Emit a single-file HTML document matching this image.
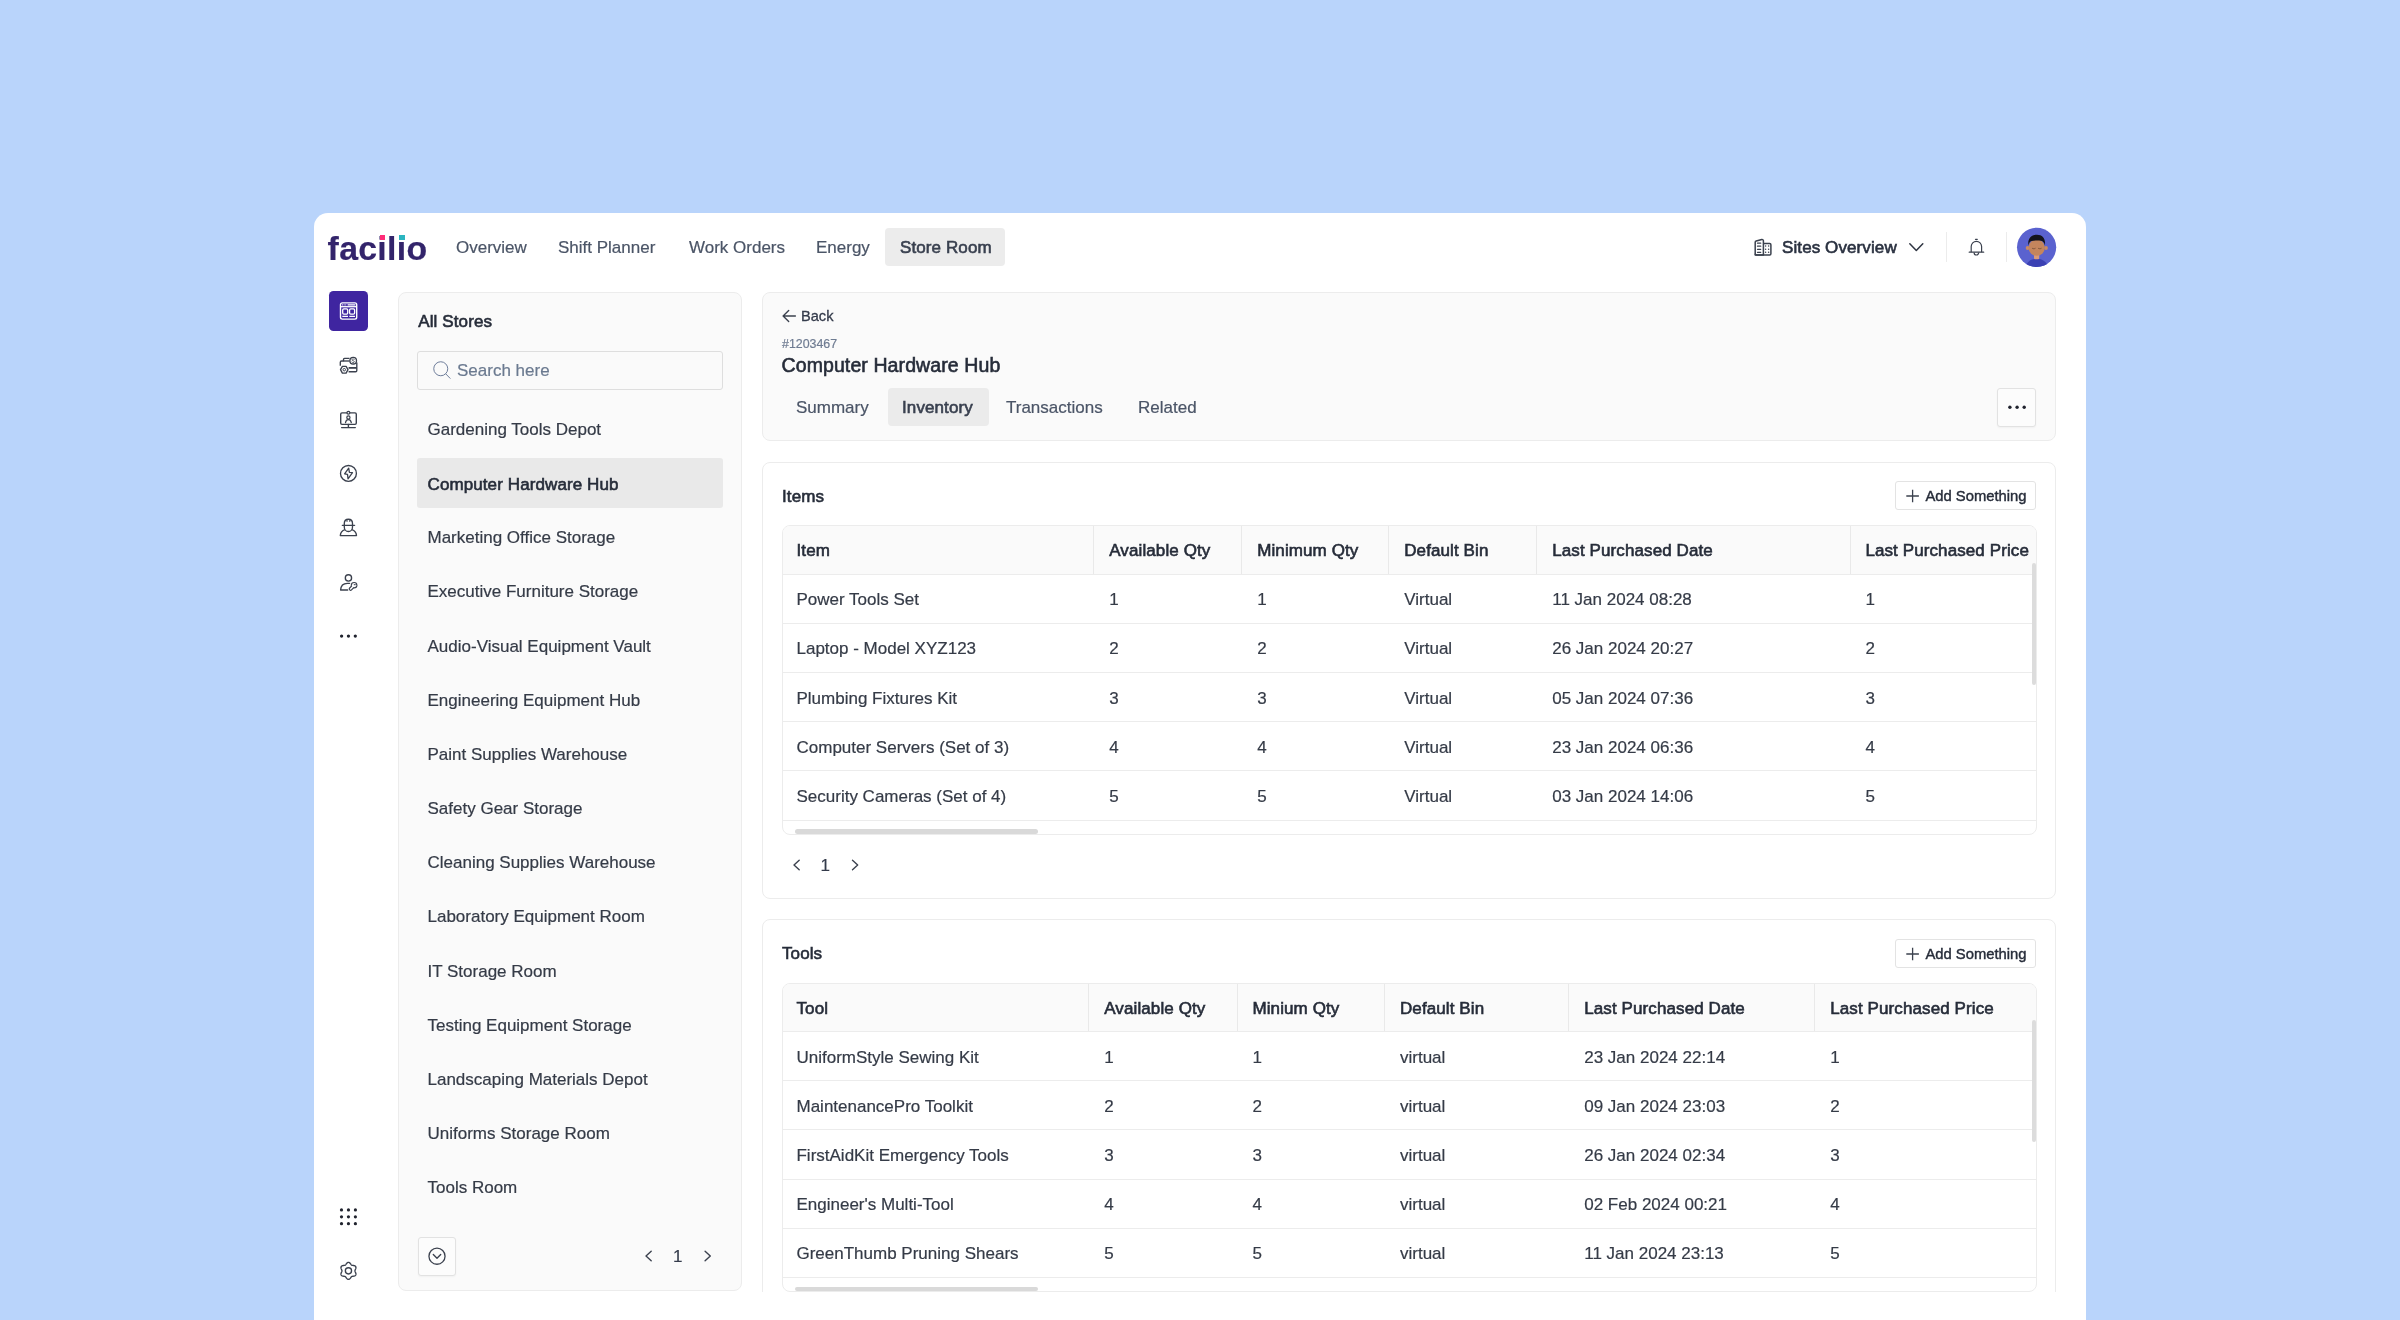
<!DOCTYPE html>
<html lang="en">
<head>
<meta charset="utf-8">
<title>Facilio - Store Room</title>
<style>
*{box-sizing:border-box;margin:0;padding:0}
html,body{width:2400px;height:1320px;overflow:hidden}
body{background:#b9d4fb;position:relative;font-family:"Liberation Sans",sans-serif;font-size:17px;color:#2f3646;-webkit-font-smoothing:antialiased;-webkit-text-stroke:0.2px currentColor}
#root{position:absolute;left:0;top:0;width:2400px;height:1320px;will-change:transform}
#root>div,.tbl>div{position:absolute}
svg{position:absolute;overflow:visible}
.m{-webkit-text-stroke:0.6px currentColor;letter-spacing:0.1px}
#app{left:313.9px;top:212.7px;width:1772px;height:1110px;background:#fff;border-radius:14px 14px 0 0}
.nav{top:228px;height:40px;line-height:40px;color:#4b5567;white-space:nowrap}
.navsel{left:885.3px;top:227.6px;width:120px;height:38.8px;background:#ececec;border-radius:4px}
.logo{left:327.6px;top:228.4px;font-weight:bold;font-size:33.8px;line-height:40px;color:#33246b;letter-spacing:0.3px;white-space:nowrap}
.vdiv{width:1px;height:30px;top:232px;background:#ececec}
.rail-active{left:328.7px;top:291px;width:39.4px;height:40px;background:#3f25a0;border-radius:4.5px}
.panel{background:#fafafa;border:1px solid #ececec;border-radius:8px}
.card{background:#fff;border:1px solid #ececec;border-radius:8px}
.li{left:427.5px;height:49px;line-height:49px;color:#353b47;white-space:nowrap}
.li.sel{-webkit-text-stroke:0.6px currentColor;color:#262c39;letter-spacing:0.1px}
.lisel{background:#e9e9e9;border-radius:3px}
.search{left:417.4px;top:351px;width:305.2px;height:38.6px;border:1px solid #dedede;border-radius:3px;background:#fafafa}
.sbtn{border:1px solid #e2e2e2;border-radius:3px;background:#fcfcfc;box-shadow:0 1px 2px rgba(0,0,0,0.04)}
.h{white-space:nowrap;color:#262c39}
.tab{top:388px;height:40px;line-height:40px;color:#4b5567;white-space:nowrap}
.tabsel{left:887.8px;top:387.5px;width:101px;height:38.8px;background:#ebebeb;border-radius:4px}
.addbtn{left:1895.4px;width:141px;height:29.3px;border:1px solid #e3e3e3;border-radius:3px;background:#fff;font-size:14.8px;line-height:28px;padding-left:29px;white-space:nowrap;color:#262c39;-webkit-text-stroke:0.4px currentColor}
.tbl{border:1px solid #ececec;border-radius:8px;overflow:hidden;background:#fff}
.thead{left:0;top:0;width:100%;background:#fafafa}
.th{white-space:nowrap;color:#262c39;-webkit-text-stroke:0.6px currentColor;letter-spacing:0.1px}
.vsep{top:0;width:1px;background:#e9e9e9}
.td{white-space:nowrap;color:#353b47}
.hline{left:0;width:100%;height:1px;background:#ececec}
.hscroll{left:11.5px;width:243.5px;height:4.6px;border-radius:3px;background:#d9d9d9}
.vscroll{width:3.8px;height:122px;border-radius:2px;background:#dcdcdc}
.pg{white-space:nowrap;color:#343b4b;font-size:17px;line-height:30px;height:30px}
.clip{left:742px;top:280px;width:1344px;height:1011px;overflow:hidden}

</style>
</head>
<body>
<div id="root">
<div id="app"></div>

<!-- top nav -->
<div class="logo">facilio</div>
<div style="left:379.8px;top:234.6px;width:5.4px;height:5.2px;background:#ff2d78"></div>
<div style="left:399.4px;top:234.6px;width:5.6px;height:5.2px;background:#2bb5c0"></div>
<div class="nav" style="left:456px">Overview</div>
<div class="nav" style="left:558px">Shift Planner</div>
<div class="nav" style="left:689px">Work Orders</div>
<div class="nav" style="left:816px">Energy</div>
<div class="navsel"></div>
<div class="nav m" style="left:900px;color:#39404f">Store Room</div>
<svg style="left:1750px;top:234px" width="26" height="26" viewBox="1750 234 26 26" fill="none" >
<path d="M1755.2 254.9V242.2c0-.6.4-1.1 1-1.2l5.6-1.5c.8-.2 1.6.4 1.6 1.2v14.2z" stroke="#3b414e" stroke-width="1.5" stroke-linejoin="round"/>
<path d="M1763.4 243.6h6.3c.7 0 1.2.5 1.2 1.2v8.9c0 .7-.5 1.2-1.2 1.2h-13.3c-.7 0-1.2-.5-1.2-1.2" stroke="#3b414e" stroke-width="1.5" stroke-linejoin="round"/>
<path d="M1757.5 243.2h3.2M1757.5 246.2h3.2M1757.5 249.3h3.2M1757.5 252.3h3.2" stroke="#3b414e" stroke-width="1.3" stroke-linecap="round"/>
<g fill="#3b414e"><circle cx="1765.6" cy="246" r=".75"/><circle cx="1768.6" cy="246" r=".75"/><circle cx="1765.6" cy="249.2" r=".75"/><circle cx="1768.6" cy="249.2" r=".75"/><circle cx="1765.6" cy="252.3" r=".75"/><circle cx="1768.6" cy="252.3" r=".75"/></g>
</svg>
<div class="nav m" style="left:1782px;color:#2a3140">Sites Overview</div>
<svg style="left:1904px;top:238px" width="24" height="18" viewBox="1904 238 24 18" fill="none" ><path d="M1909.8 243.7l6.5 6.8 6.5-6.8" stroke="#2f3542" stroke-width="1.5" stroke-linecap="round" stroke-linejoin="round"/></svg>
<div class="vdiv" style="left:1946px"></div>
<svg style="left:1964px;top:234px" width="26" height="26" viewBox="1964 234 26 26" fill="none" >
<path d="M1975.5 239.3h1.8" stroke="#3b414e" stroke-width="1.2" stroke-linecap="round"/>
<path d="M1971.2 252.2v-5.6a5.2 5.2 0 0 1 10.4 0v5.6" stroke="#3b414e" stroke-width="1.2"/>
<path d="M1969.2 252.2h14.5" stroke="#3b414e" stroke-width="1.2" stroke-linecap="round"/>
<path d="M1974.1 252.4a2.3 2.6 0 0 0 4.6 0" stroke="#3b414e" stroke-width="1.2"/>
</svg>
<div class="vdiv" style="left:2006px"></div>
<svg style="left:2016px;top:226px" width="42" height="42" viewBox="2016 226 42 42" fill="none" >
<defs><clipPath id="avc"><circle cx="2036.6" cy="247.3" r="19.6"/></clipPath></defs>
<circle cx="2036.6" cy="247.3" r="19.6" fill="#5a62cf"/>
<g clip-path="url(#avc)">
<path d="M2025.5 268c1-6 5-9.3 11.2-9.3s10.5 3.300 11.500 9.300z" fill="#3b41b3"/>
<rect x="2034" y="254" width="5.200" height="5.200" rx="1" fill="#d79a7c"/>
<circle cx="2027.6" cy="248" r="1.900" fill="#c98a62"/><circle cx="2046" cy="248" r="1.900" fill="#c98a62"/>
<ellipse cx="2036.7" cy="247.600" rx="8.100" ry="8.200" fill="#c4855d"/>
<path d="M2028.4 245.500C2027.400 239 2031 234.800 2037 234.800C2042.800 234.800 2045.800 239 2044.900 245.500C2044.300 242.600 2043.200 241.200 2041 240.800C2038 240.300 2034 240.400 2031.500 241.100C2029.800 241.700 2029 243.200 2028.400 245.500Z" fill="#14141c"/>
<path d="M2032.400 248.400c.9.500 1.900.500 2.800 0M2038.400 248.400c.9.500 1.900.500 2.800 0" stroke="#5b3a2a" stroke-width=".6" stroke-linecap="round"/>
</g>
</svg>

<!-- icon rail -->
<div class="rail-active"></div>
<svg style="left:330px;top:292px" width="38" height="38" viewBox="330 292 38 38" fill="none" >
<rect x="340.500" y="302.900" width="16.200" height="16.200" rx="1.800" stroke="#fff" stroke-width="1.400"/>
<path d="M340.500 306.700h16.200" stroke="#fff" stroke-width="1.300"/>
<path d="M342 304.800h.8M343.700 304.800h.8M345.400 304.800h.8M347.600 304.800h7.800" stroke="#fff" stroke-width="1.250"/>
<rect x="342.700" y="308.900" width="5" height="5.300" rx="1.100" stroke="#fff" stroke-width="1.300"/>
<rect x="349.600" y="308.900" width="5" height="5.300" rx="1.100" stroke="#fff" stroke-width="1.300"/>
<path d="M342.300 316.400h5.700M349.300 316.400h5.700" stroke="#fff" stroke-width="1.300"/>
</svg><svg style="left:336px;top:353px" width="26" height="26" viewBox="336 353 26 26" fill="none" >
<path d="M349.500 358.400h-5c-.6 0-1 .4-1 1v1.600h-2c-.7 0-1.200.500-1.200 1.200v3.500" stroke="#3b414e" stroke-width="1.350" stroke-linejoin="round"/>
<path d="M343.500 361h6.200" stroke="#3b414e" stroke-width="1.350"/>
<path d="M356.800 362.500v8c0 .700-.5 1.200-1.200 1.200h-7" stroke="#3b414e" stroke-width="1.350" stroke-linejoin="round"/>
<path d="M348.600 367.900h8.200" stroke="#3b414e" stroke-width="1.800"/>
<circle cx="353.200" cy="360.700" r="3.300" stroke="#3b414e" stroke-width="1.350" fill="#fff"/>
<path d="M354.300 359.500c-.3-.4-.7-.6-1.200-.6-.7 0-1.200.4-1.200.9 0 1.200 2.500.6 2.500 1.900 0 .5-.5.900-1.200.9-.5 0-1-.2-1.300-.6" stroke="#3b414e" stroke-width=".8" stroke-linecap="round"/>
<path d="M342.400 366.300h3.700l1.900 3.400-1.900 3.400h-3.700l-1.900-3.400z" stroke="#3b414e" stroke-width="1.350" stroke-linejoin="round" fill="#fff"/>
<circle cx="344.250" cy="369.700" r="1.250" stroke="#3b414e" stroke-width="1"/>
</svg><svg style="left:336px;top:407px" width="26" height="26" viewBox="336 407 26 26" fill="none" >
<rect x="340.700" y="412.900" width="15.600" height="11.500" rx="1.300" stroke="#3b414e" stroke-width="1.400"/>
<circle cx="348.400" cy="412.800" r="1.450" stroke="#3b414e" stroke-width="1.250" fill="#fff"/>
<path d="M348.400 424.400v3.100M341.600 427.600h13.700" stroke="#3b414e" stroke-width="1.400" stroke-linecap="round"/>
<circle cx="348.400" cy="417.400" r="1.600" stroke="#3b414e" stroke-width="1.250"/>
<path d="M345.500 422.600c.4-1.900 1.500-2.900 2.900-2.900s2.500 1 2.900 2.900" stroke="#3b414e" stroke-width="1.250" stroke-linecap="round"/>
</svg><svg style="left:336px;top:461px" width="26" height="26" viewBox="336 461 26 26" fill="none" >
<circle cx="348.450" cy="473.450" r="7.950" stroke="#3b414e" stroke-width="1.350"/>
<path d="M348.700 468.100l-4.100 5.700 2.900.5.500 4.500 4.500-6.100-3.100-.4z" stroke="#3b414e" stroke-width="1.300" stroke-linejoin="round"/>
</svg><svg style="left:336px;top:515px" width="26" height="26" viewBox="336 515 26 26" fill="none" >
<path d="M342.300 525.300h12.300" stroke="#3b414e" stroke-width="1.350" stroke-linecap="round"/>
<path d="M344.300 525.300v-1.800c0-2.500 1.700-4.300 4.100-4.300s4.100 1.800 4.100 4.300v1.800" stroke="#3b414e" stroke-width="1.350"/>
<path d="M347 519.600v2.300M349.800 519.600v2.300" stroke="#3b414e" stroke-width="1"/>
<path d="M344.300 525.300v1.600c0 2.600 1.700 4.600 4.100 4.600s4.100-2 4.100-4.600v-1.600" stroke="#3b414e" stroke-width="1.350"/>
<path d="M345 529.600c-2.800.9-4.500 3-4.700 6h16.200c-.2-3-1.900-5.100-4.700-6" stroke="#3b414e" stroke-width="1.350" stroke-linejoin="round"/>
</svg><svg style="left:336px;top:569px" width="26" height="26" viewBox="336 569 26 26" fill="none" >
<circle cx="348.450" cy="577.900" r="3.150" stroke="#3b414e" stroke-width="1.350"/>
<path d="M349.600 583.300h-2.200c-4 0-6.600 2.600-6.800 6.700h7.100" stroke="#3b414e" stroke-width="1.350" stroke-linejoin="round" stroke-linecap="round"/>
<path d="M350.600 588.900l2.600-2.700" stroke="#3b414e" stroke-width="3.800" stroke-linecap="round"/>
<circle cx="354.100" cy="585.200" r="3.300" fill="#3b414e"/>
<path d="M350.600 588.900l2.600-2.700" stroke="#fff" stroke-width="1.500" stroke-linecap="round"/>
<circle cx="354.100" cy="585.200" r="2.150" fill="#fff"/>
<path d="M354.200 584.700h1.100" stroke="#3b414e" stroke-width="1" stroke-linecap="round"/>
</svg><svg style="left:336px;top:626px" width="26" height="20" viewBox="336 626 26 20" fill="none" ><g fill="#20232e"><circle cx="341.600" cy="636.100" r="1.650"/><circle cx="348.450" cy="636.100" r="1.650"/><circle cx="355.300" cy="636.100" r="1.650"/></g></svg><svg style="left:336px;top:1204px" width="26" height="26" viewBox="336 1204 26 26" fill="none" ><g fill="#20232e"><circle cx="341.5" cy="1209.9" r="1.600"/><circle cx="348.45" cy="1209.9" r="1.600"/><circle cx="355.4" cy="1209.9" r="1.600"/><circle cx="341.5" cy="1216.8" r="1.600"/><circle cx="348.45" cy="1216.8" r="1.600"/><circle cx="355.4" cy="1216.8" r="1.600"/><circle cx="341.5" cy="1223.7" r="1.600"/><circle cx="348.45" cy="1223.7" r="1.600"/><circle cx="355.4" cy="1223.7" r="1.600"/></g></svg><svg style="left:336px;top:1258px" width="26" height="26" viewBox="336 1258 26 26" fill="none" ><path d="M354.95 1270.85 L354.99 1270.50 L355.09 1270.14 L355.25 1269.76 L355.44 1269.34 L355.63 1268.90 L355.80 1268.43 L355.91 1267.94 L355.94 1267.47 L355.87 1267.01 L355.70 1266.60 L355.43 1266.25 L355.08 1265.96 L354.66 1265.75 L354.19 1265.60 L353.71 1265.51 L353.23 1265.46 L352.78 1265.42 L352.38 1265.36 L352.02 1265.28 L351.70 1265.13 L351.42 1264.93 L351.17 1264.65 L350.92 1264.32 L350.66 1263.95 L350.37 1263.56 L350.06 1263.18 L349.70 1262.84 L349.31 1262.58 L348.89 1262.41 L348.45 1262.35 L348.01 1262.41 L347.59 1262.58 L347.20 1262.84 L346.84 1263.18 L346.53 1263.56 L346.24 1263.95 L345.98 1264.32 L345.73 1264.65 L345.48 1264.93 L345.20 1265.13 L344.88 1265.28 L344.52 1265.36 L344.12 1265.42 L343.67 1265.46 L343.19 1265.51 L342.71 1265.60 L342.24 1265.75 L341.82 1265.96 L341.47 1266.25 L341.20 1266.60 L341.03 1267.01 L340.96 1267.47 L340.99 1267.94 L341.10 1268.43 L341.27 1268.90 L341.46 1269.34 L341.65 1269.76 L341.81 1270.14 L341.91 1270.50 L341.95 1270.85 L341.91 1271.20 L341.81 1271.56 L341.65 1271.94 L341.46 1272.36 L341.27 1272.80 L341.10 1273.27 L340.99 1273.76 L340.96 1274.23 L341.03 1274.69 L341.20 1275.10 L341.47 1275.45 L341.82 1275.74 L342.24 1275.95 L342.71 1276.10 L343.19 1276.19 L343.67 1276.24 L344.12 1276.28 L344.52 1276.34 L344.88 1276.42 L345.20 1276.57 L345.48 1276.77 L345.73 1277.05 L345.98 1277.38 L346.24 1277.75 L346.53 1278.14 L346.84 1278.52 L347.20 1278.86 L347.59 1279.12 L348.01 1279.29 L348.45 1279.35 L348.89 1279.29 L349.31 1279.12 L349.70 1278.86 L350.06 1278.52 L350.37 1278.14 L350.66 1277.75 L350.92 1277.38 L351.17 1277.05 L351.42 1276.77 L351.70 1276.57 L352.02 1276.42 L352.38 1276.34 L352.78 1276.28 L353.23 1276.24 L353.71 1276.19 L354.19 1276.10 L354.66 1275.95 L355.08 1275.74 L355.43 1275.45 L355.70 1275.10 L355.87 1274.69 L355.94 1274.23 L355.91 1273.76 L355.80 1273.27 L355.63 1272.80 L355.44 1272.36 L355.25 1271.94 L355.09 1271.56 L354.99 1271.20Z" stroke="#3b414e" stroke-width="1.350" stroke-linejoin="round"/><circle cx="348.45" cy="1270.85" r="3.100" stroke="#3b414e" stroke-width="1.350"/></svg>

<!-- sidebar -->
<div class="panel" style="left:398px;top:292px;width:344px;height:999px"></div>
<div class="h m" style="left:418.3px;top:307px;line-height:30px">All Stores</div>
<div class="search"></div>
<svg style="left:430px;top:358px" width="24" height="24" viewBox="430 358 24 24" fill="none" ><circle cx="440.750" cy="368.750" r="7" stroke="#6f7e9b" stroke-width="1"/><path d="M445.800 373.900l4.300 4.400" stroke="#6f7e9b" stroke-width="1" stroke-linecap="round"/></svg>
<div style="left:457px;top:351px;line-height:40px;color:#6b7a90;white-space:nowrap">Search here</div>
<div class="lisel" style="left:417.3px;top:458.4px;width:305.4px;height:49.3px"></div>
<div class="li" style="top:405.0px">Gardening Tools Depot</div>
<div class="li sel" style="top:459.75px">Computer Hardware Hub</div>
<div class="li" style="top:513.3px">Marketing Office Storage</div>
<div class="li" style="top:567.45px">Executive Furniture Storage</div>
<div class="li" style="top:621.6px">Audio-Visual Equipment Vault</div>
<div class="li" style="top:675.75px">Engineering Equipment Hub</div>
<div class="li" style="top:729.9px">Paint Supplies Warehouse</div>
<div class="li" style="top:784.05px">Safety Gear Storage</div>
<div class="li" style="top:838.2px">Cleaning Supplies Warehouse</div>
<div class="li" style="top:892.3499999999999px">Laboratory Equipment Room</div>
<div class="li" style="top:946.5px">IT Storage Room</div>
<div class="li" style="top:1000.6500000000001px">Testing Equipment Storage</div>
<div class="li" style="top:1054.8px">Landscaping Materials Depot</div>
<div class="li" style="top:1108.9499999999998px">Uniforms Storage Room</div>
<div class="li" style="top:1163.1px">Tools Room</div>
<div class="sbtn" style="left:417.6px;top:1237px;width:38.9px;height:38.8px"></div>
<svg style="left:426px;top:1245px" width="22" height="22" viewBox="426 1245 22 22" fill="none" ><circle cx="437" cy="1256.200" r="8.050" stroke="#3b414e" stroke-width="1.300"/><path d="M433.300 1254.500l3.700 3.800 3.700-3.800" stroke="#3b414e" stroke-width="1.350" stroke-linecap="round" stroke-linejoin="round"/></svg>
<svg style="left:642.2px;top:1248.2px" width="72.29999999999995" height="16" viewBox="642.2 1248.2 72.29999999999995 16" fill="none" ><path d="M651.4 1251.4L646.2 1256.2L651.4 1261.0M705.3 1251.4L710.5 1256.2L705.3 1261.0" stroke="#3b414e" stroke-width="1.400" stroke-linecap="round" stroke-linejoin="round"/></svg>
<div class="pg" style="left:673px;top:1242px">1</div>

<!-- header card -->
<div class="panel" style="left:762px;top:291.7px;width:1294px;height:149.5px"></div>
<svg style="left:778px;top:306px" width="22" height="20" viewBox="778 306 22 20" fill="none" ><path d="M783.200 316h12.200M788.700 310.500l-5.600 5.500 5.600 5.500" stroke="#3b414e" stroke-width="1.350" stroke-linecap="round" stroke-linejoin="round"/></svg>
<div style="left:801px;top:301px;line-height:30px;font-size:14.6px;color:#343b4b;white-space:nowrap;-webkit-text-stroke:0.3px currentColor">Back</div>
<div style="left:782px;top:334px;line-height:20px;font-size:12.4px;color:#6f7c92;white-space:nowrap">#1203467</div>
<div class="h m" style="left:781.5px;top:350px;line-height:30px;font-size:19.5px">Computer Hardware Hub</div>
<div class="tab" style="left:796px">Summary</div>
<div class="tabsel"></div>
<div class="tab m" style="left:902px;color:#39404f">Inventory</div>
<div class="tab" style="left:1006px">Transactions</div>
<div class="tab" style="left:1138px">Related</div>
<div class="sbtn" style="left:1997.4px;top:387.8px;width:39.1px;height:38.8px"></div>
<svg style="left:2004px;top:400px" width="26" height="14" viewBox="2004 400 26 14" fill="none" ><g fill="#20232e"><circle cx="2009.900" cy="407.250" r="1.700"/><circle cx="2017.100" cy="407.250" r="1.700"/><circle cx="2024.200" cy="407.250" r="1.700"/></g></svg>

<!-- items card -->
<div class="card" style="left:762px;top:461.5px;width:1294px;height:437px"></div>
<div class="h m" style="left:782px;top:482px;line-height:30px">Items</div>
<div class="addbtn" style="top:481px">Add Something</div>
<svg style="left:1904px;top:487.6px" width="18" height="16" viewBox="1904 487.6 18 16" fill="none" ><path d="M1906.300 495.6h12.600M1912.600 489.3v12.600" stroke="#3b414e" stroke-width="1.300"/></svg>
<div class="tbl" style="left:782.2px;top:525.3px;width:1255px;height:309.7px">
<div class="thead" style="height:47.3px"></div>
<div class="th" style="left:13.30px;top:0.9000000000000001px;height:47.3px;line-height:47.3px">Item</div>
<div class="vsep" style="left:310.25px;height:47.3px"></div>
<div class="th" style="left:326.05px;top:0.9000000000000001px;height:47.3px;line-height:47.3px">Available Qty</div>
<div class="vsep" style="left:458.25px;height:47.3px"></div>
<div class="th" style="left:474.05px;top:0.9000000000000001px;height:47.3px;line-height:47.3px">Minimum Qty</div>
<div class="vsep" style="left:605.25px;height:47.3px"></div>
<div class="th" style="left:621.05px;top:0.9000000000000001px;height:47.3px;line-height:47.3px">Default Bin</div>
<div class="vsep" style="left:753.25px;height:47.3px"></div>
<div class="th" style="left:769.05px;top:0.9000000000000001px;height:47.3px;line-height:47.3px">Last Purchased Date</div>
<div class="vsep" style="left:1066.40px;height:47.3px"></div>
<div class="th" style="left:1082.20px;top:0.9000000000000001px;height:47.3px;line-height:47.3px">Last Purchased Price</div>
<div class="hline" style="top:47.30px"></div>
<div class="hline" style="top:96.50px"></div>
<div class="hline" style="top:145.70px"></div>
<div class="hline" style="top:194.90px"></div>
<div class="hline" style="top:244.10px"></div>
<div class="hline" style="top:293.30px"></div>
<div class="td" style="left:13.30px;top:49.90px;height:48.2px;line-height:48.2px">Power Tools Set</div>
<div class="td" style="left:326.05px;top:49.90px;height:48.2px;line-height:48.2px">1</div>
<div class="td" style="left:474.05px;top:49.90px;height:48.2px;line-height:48.2px">1</div>
<div class="td" style="left:621.05px;top:49.90px;height:48.2px;line-height:48.2px">Virtual</div>
<div class="td" style="left:769.05px;top:49.90px;height:48.2px;line-height:48.2px">11 Jan 2024 08:28</div>
<div class="td" style="left:1082.20px;top:49.90px;height:48.2px;line-height:48.2px">1</div>
<div class="td" style="left:13.30px;top:99.10px;height:48.2px;line-height:48.2px">Laptop - Model XYZ123</div>
<div class="td" style="left:326.05px;top:99.10px;height:48.2px;line-height:48.2px">2</div>
<div class="td" style="left:474.05px;top:99.10px;height:48.2px;line-height:48.2px">2</div>
<div class="td" style="left:621.05px;top:99.10px;height:48.2px;line-height:48.2px">Virtual</div>
<div class="td" style="left:769.05px;top:99.10px;height:48.2px;line-height:48.2px">26 Jan 2024 20:27</div>
<div class="td" style="left:1082.20px;top:99.10px;height:48.2px;line-height:48.2px">2</div>
<div class="td" style="left:13.30px;top:148.30px;height:48.2px;line-height:48.2px">Plumbing Fixtures Kit</div>
<div class="td" style="left:326.05px;top:148.30px;height:48.2px;line-height:48.2px">3</div>
<div class="td" style="left:474.05px;top:148.30px;height:48.2px;line-height:48.2px">3</div>
<div class="td" style="left:621.05px;top:148.30px;height:48.2px;line-height:48.2px">Virtual</div>
<div class="td" style="left:769.05px;top:148.30px;height:48.2px;line-height:48.2px">05 Jan 2024 07:36</div>
<div class="td" style="left:1082.20px;top:148.30px;height:48.2px;line-height:48.2px">3</div>
<div class="td" style="left:13.30px;top:197.50px;height:48.2px;line-height:48.2px">Computer Servers (Set of 3)</div>
<div class="td" style="left:326.05px;top:197.50px;height:48.2px;line-height:48.2px">4</div>
<div class="td" style="left:474.05px;top:197.50px;height:48.2px;line-height:48.2px">4</div>
<div class="td" style="left:621.05px;top:197.50px;height:48.2px;line-height:48.2px">Virtual</div>
<div class="td" style="left:769.05px;top:197.50px;height:48.2px;line-height:48.2px">23 Jan 2024 06:36</div>
<div class="td" style="left:1082.20px;top:197.50px;height:48.2px;line-height:48.2px">4</div>
<div class="td" style="left:13.30px;top:246.70px;height:48.2px;line-height:48.2px">Security Cameras (Set of 4)</div>
<div class="td" style="left:326.05px;top:246.70px;height:48.2px;line-height:48.2px">5</div>
<div class="td" style="left:474.05px;top:246.70px;height:48.2px;line-height:48.2px">5</div>
<div class="td" style="left:621.05px;top:246.70px;height:48.2px;line-height:48.2px">Virtual</div>
<div class="td" style="left:769.05px;top:246.70px;height:48.2px;line-height:48.2px">03 Jan 2024 14:06</div>
<div class="td" style="left:1082.20px;top:246.70px;height:48.2px;line-height:48.2px">5</div>
<div class="hscroll" style="top:302.90px"></div>
</div>
<div class="vscroll" style="left:2032.2px;top:562.6999999999999px"></div>
<svg style="left:790.0px;top:857.2px" width="71.70000000000005" height="16" viewBox="790.0 857.2 71.70000000000005 16" fill="none" ><path d="M799.2 860.4000000000001L794.0 865.2L799.2 870.0M852.5 860.4000000000001L857.7 865.2L852.5 870.0" stroke="#3b414e" stroke-width="1.400" stroke-linecap="round" stroke-linejoin="round"/></svg>
<div class="pg" style="left:820.6px;top:850.6px">1</div>

<!-- tools card -->
<div class="card" style="left:762px;top:918.8px;width:1294px;height:437px"></div>
<div class="h m" style="left:782px;top:939.2px;line-height:30px">Tools</div>
<div class="addbtn" style="top:939px">Add Something</div>
<svg style="left:1904px;top:946.0px" width="18" height="16" viewBox="1904 946.0 18 16" fill="none" ><path d="M1906.300 954.0h12.600M1912.600 947.7v12.600" stroke="#3b414e" stroke-width="1.300"/></svg>
<div class="tbl" style="left:782.2px;top:982.7px;width:1255px;height:309.7px">
<div class="thead" style="height:47.3px"></div>
<div class="th" style="left:13.30px;top:0.9000000000000001px;height:47.3px;line-height:47.3px">Tool</div>
<div class="vsep" style="left:305.25px;height:47.3px"></div>
<div class="th" style="left:321.05px;top:0.9000000000000001px;height:47.3px;line-height:47.3px">Available Qty</div>
<div class="vsep" style="left:453.50px;height:47.3px"></div>
<div class="th" style="left:469.30px;top:0.9000000000000001px;height:47.3px;line-height:47.3px">Minium Qty</div>
<div class="vsep" style="left:601.00px;height:47.3px"></div>
<div class="th" style="left:616.80px;top:0.9000000000000001px;height:47.3px;line-height:47.3px">Default Bin</div>
<div class="vsep" style="left:785.25px;height:47.3px"></div>
<div class="th" style="left:801.05px;top:0.9000000000000001px;height:47.3px;line-height:47.3px">Last Purchased Date</div>
<div class="vsep" style="left:1031.25px;height:47.3px"></div>
<div class="th" style="left:1047.05px;top:0.9000000000000001px;height:47.3px;line-height:47.3px">Last Purchased Price</div>
<div class="hline" style="top:47.30px"></div>
<div class="hline" style="top:96.50px"></div>
<div class="hline" style="top:145.70px"></div>
<div class="hline" style="top:194.90px"></div>
<div class="hline" style="top:244.10px"></div>
<div class="hline" style="top:293.30px"></div>
<div class="td" style="left:13.30px;top:49.90px;height:48.2px;line-height:48.2px">UniformStyle Sewing Kit</div>
<div class="td" style="left:321.05px;top:49.90px;height:48.2px;line-height:48.2px">1</div>
<div class="td" style="left:469.30px;top:49.90px;height:48.2px;line-height:48.2px">1</div>
<div class="td" style="left:616.80px;top:49.90px;height:48.2px;line-height:48.2px">virtual</div>
<div class="td" style="left:801.05px;top:49.90px;height:48.2px;line-height:48.2px">23 Jan 2024 22:14</div>
<div class="td" style="left:1047.05px;top:49.90px;height:48.2px;line-height:48.2px">1</div>
<div class="td" style="left:13.30px;top:99.10px;height:48.2px;line-height:48.2px">MaintenancePro Toolkit</div>
<div class="td" style="left:321.05px;top:99.10px;height:48.2px;line-height:48.2px">2</div>
<div class="td" style="left:469.30px;top:99.10px;height:48.2px;line-height:48.2px">2</div>
<div class="td" style="left:616.80px;top:99.10px;height:48.2px;line-height:48.2px">virtual</div>
<div class="td" style="left:801.05px;top:99.10px;height:48.2px;line-height:48.2px">09 Jan 2024 23:03</div>
<div class="td" style="left:1047.05px;top:99.10px;height:48.2px;line-height:48.2px">2</div>
<div class="td" style="left:13.30px;top:148.30px;height:48.2px;line-height:48.2px">FirstAidKit Emergency Tools</div>
<div class="td" style="left:321.05px;top:148.30px;height:48.2px;line-height:48.2px">3</div>
<div class="td" style="left:469.30px;top:148.30px;height:48.2px;line-height:48.2px">3</div>
<div class="td" style="left:616.80px;top:148.30px;height:48.2px;line-height:48.2px">virtual</div>
<div class="td" style="left:801.05px;top:148.30px;height:48.2px;line-height:48.2px">26 Jan 2024 02:34</div>
<div class="td" style="left:1047.05px;top:148.30px;height:48.2px;line-height:48.2px">3</div>
<div class="td" style="left:13.30px;top:197.50px;height:48.2px;line-height:48.2px">Engineer's Multi-Tool</div>
<div class="td" style="left:321.05px;top:197.50px;height:48.2px;line-height:48.2px">4</div>
<div class="td" style="left:469.30px;top:197.50px;height:48.2px;line-height:48.2px">4</div>
<div class="td" style="left:616.80px;top:197.50px;height:48.2px;line-height:48.2px">virtual</div>
<div class="td" style="left:801.05px;top:197.50px;height:48.2px;line-height:48.2px">02 Feb 2024 00:21</div>
<div class="td" style="left:1047.05px;top:197.50px;height:48.2px;line-height:48.2px">4</div>
<div class="td" style="left:13.30px;top:246.70px;height:48.2px;line-height:48.2px">GreenThumb Pruning Shears</div>
<div class="td" style="left:321.05px;top:246.70px;height:48.2px;line-height:48.2px">5</div>
<div class="td" style="left:469.30px;top:246.70px;height:48.2px;line-height:48.2px">5</div>
<div class="td" style="left:616.80px;top:246.70px;height:48.2px;line-height:48.2px">virtual</div>
<div class="td" style="left:801.05px;top:246.70px;height:48.2px;line-height:48.2px">11 Jan 2024 23:13</div>
<div class="td" style="left:1047.05px;top:246.70px;height:48.2px;line-height:48.2px">5</div>
<div class="hscroll" style="top:302.90px"></div>
</div>
<div class="vscroll" style="left:2032.2px;top:1020.1px"></div>

<!-- bottom cover -->
<div style="left:743px;top:1291.8px;width:1343px;height:29px;background:#fff"></div>
</div>
</body>
</html>
